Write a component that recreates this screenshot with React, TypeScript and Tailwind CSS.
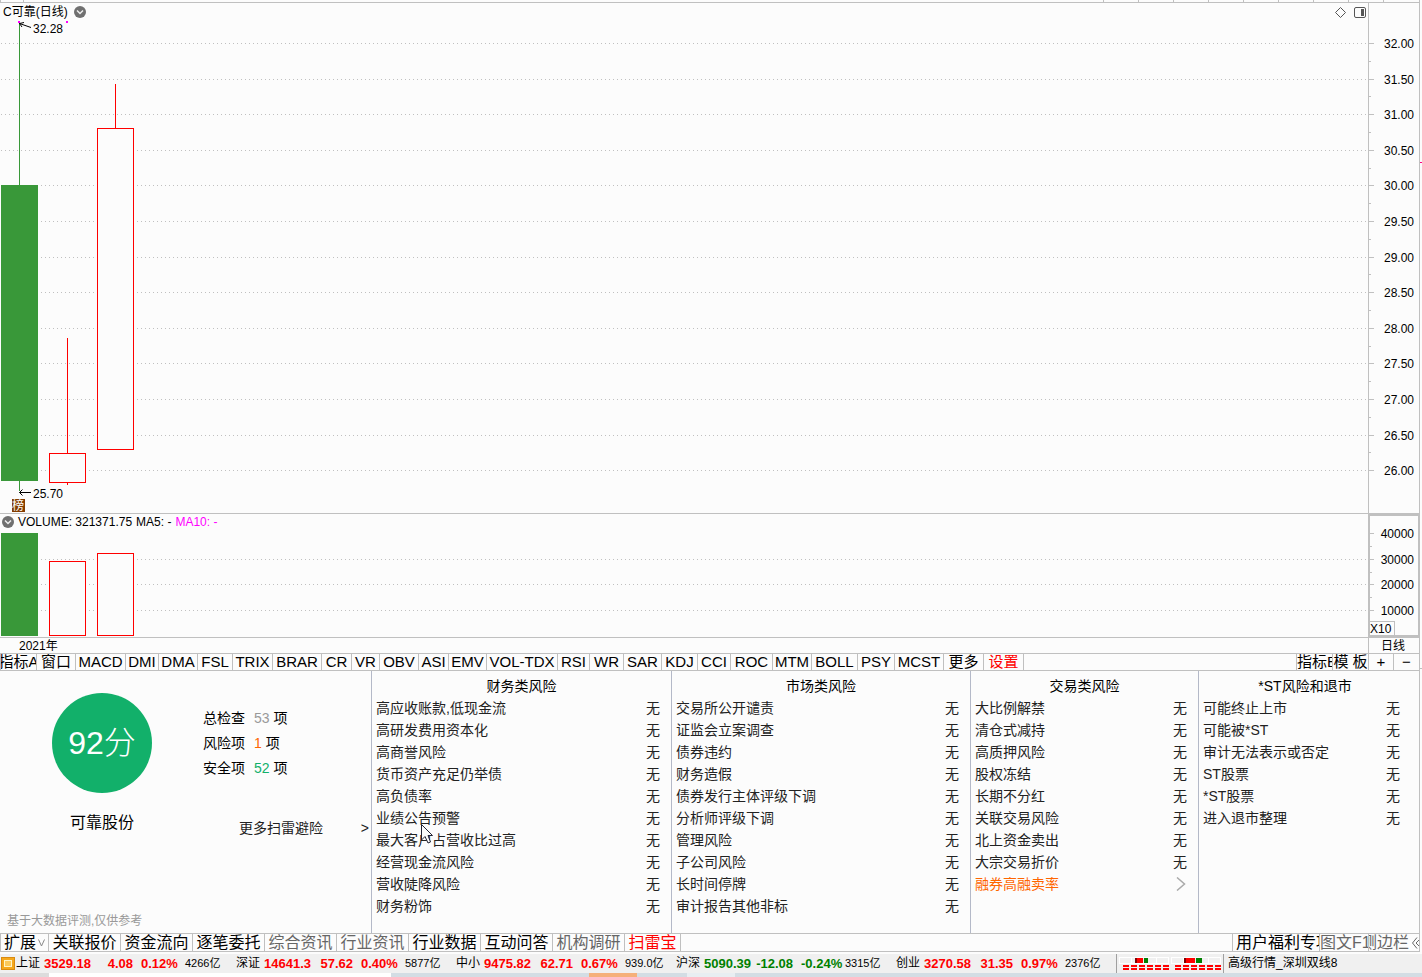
import { useState } from 'react';

const LINE = '#c0c0c0';
const UP = '#ff0000';
const DOWN = '#399839';

const indicators = [
  { name: '指标A', w: 'w-[36px]' },
  { name: '窗口', w: 'w-[39px]' },
  { name: 'MACD', w: 'w-[50px]' },
  { name: 'DMI', w: 'w-[33px]' },
  { name: 'DMA', w: 'w-[39px]' },
  { name: 'FSL', w: 'w-[35px]' },
  { name: 'TRIX', w: 'w-[40px]' },
  { name: 'BRAR', w: 'w-[49px]' },
  { name: 'CR', w: 'w-[30px]' },
  { name: 'VR', w: 'w-[28px]' },
  { name: 'OBV', w: 'w-[39px]' },
  { name: 'ASI', w: 'w-[30px]' },
  { name: 'EMV', w: 'w-[38px]' },
  { name: 'VOL-TDX', w: 'w-[71px]' },
  { name: 'RSI', w: 'w-[32px]' },
  { name: 'WR', w: 'w-[34px]' },
  { name: 'SAR', w: 'w-[38px]' },
  { name: 'KDJ', w: 'w-[36px]' },
  { name: 'CCI', w: 'w-[33px]' },
  { name: 'ROC', w: 'w-[42px]' },
  { name: 'MTM', w: 'w-[39px]' },
  { name: 'BOLL', w: 'w-[46px]' },
  { name: 'PSY', w: 'w-[37px]' },
  { name: 'MCST', w: 'w-[49px]' },
  { name: '更多', w: 'w-[40px]' },
  { name: '设置', w: 'w-[40px]', red: true },
];

const risks = [
  {
    title: '财务类风险',
    w: 'w-[300px]',
    items: ['高应收账款,低现金流', '高研发费用资本化', '高商誉风险', '货币资产充足仍举债', '高负债率', '业绩公告预警', '最大客户占营收比过高', '经营现金流风险', '营收陡降风险', '财务粉饰'],
  },
  {
    title: '市场类风险',
    w: 'w-[299px]',
    items: ['交易所公开谴责', '证监会立案调查', '债券违约', '财务造假', '债券发行主体评级下调', '分析师评级下调', '管理风险', '子公司风险', '长时间停牌', '审计报告其他非标'],
  },
  {
    title: '交易类风险',
    w: 'w-[228px]',
    items: ['大比例解禁', '清仓式减持', '高质押风险', '股权冻结', '长期不分红', '关联交易风险', '北上资金卖出', '大宗交易折价', '融券高融卖率'],
  },
  {
    title: '*ST风险和退市',
    w: 'flex-1 mr-2',
    items: ['可能终止上市', '可能被*ST', '审计无法表示或否定', 'ST股票', '*ST股票', '进入退市整理'],
  },
];

const infoTabs = [
  { name: '关联报价' },
  { name: '资金流向' },
  { name: '逐笔委托' },
  { name: '综合资讯', dim: true },
  { name: '行业资讯', dim: true },
  { name: '行业数据' },
  { name: '互动问答' },
  { name: '机构调研', dim: true },
];

const quotes = [
  { name: '上证', price: '3529.18', change: '4.08', pct: '0.12%', amount: '4266亿' },
  { name: '深证', price: '14641.3', change: '57.62', pct: '0.40%', amount: '5877亿' },
  { name: '中小', price: '9475.82', change: '62.71', pct: '0.67%', amount: '939.0亿' },
  { name: '沪深', price: '5090.39', change: '-12.08', pct: '-0.24%', amount: '3315亿' },
  { name: '创业', price: '3270.58', change: '31.35', pct: '0.97%', amount: '2376亿' },
];

const prices = Array.from({ length: 13 }, (_, i) => 32 - i * 0.5);
const priceY = (p: number) => Math.round(40 + (32 - p) * 71.2) + 0.5;
const volumes = [40000, 30000, 20000, 10000];
const volumeY = (v: number) => Math.round(19 + ((40000 - v) / 10000) * 25.6) + 0.5;

function GridLine({ y }: { y: number }) {
  return <line x1="1" x2="100%" y1={y} y2={y} stroke={LINE} strokeDasharray="1 3" />;
}

function HollowBar({ x, y, h }: { x: number; y: number; h: number }) {
  return (
    <>
      <rect x={x - 3} y={y} width="43" height={h} fill="#fcfcfc" />
      <rect x={x + 0.5} y={y + 0.5} width="36" height={h - 1} fill="#fcfcfc" stroke={UP} />
    </>
  );
}

function Collapse({ label }: { label: string }) {
  return (
    <button type="button" aria-label={label} className="shrink-0">
      <svg width="12" height="12" viewBox="0 0 12 12">
        <circle cx="6" cy="6" r="6" fill="#707070" />
        <path d="M3 4.5 L6 7.5 L9 4.5" fill="none" stroke="#eee" strokeWidth="1.5" />
      </svg>
    </button>
  );
}

function PriceChart() {
  return (
    <section className="flex h-[511px] border-b border-[#c0c0c0]">
      <div className="relative min-w-0 flex-1 border-r border-[#c0c0c0]">
        <svg className="block h-full w-full" shapeRendering="crispEdges">
          {prices.map(p => <GridLine key={p} y={priceY(p)} />)}
          <rect x="1" y="182" width="39" height="296" fill="#fcfcfc" />
          <rect x="1" y="182" width="37" height="296" fill={DOWN} />
          <path d="M19.5 19V182M19.5 478V488" stroke={DOWN} />
          <HollowBar x={49} y={450} h={30} />
          <path d="M67.5 335V450M67.5 480V482" stroke={UP} />
          <HollowBar x={97} y={125} h={322} />
          <path d="M115.5 81V125" stroke={UP} />
          <path d="M18 18h2v2h-2zM66 18h2v2h-2z" fill="#ff00ff" />
          <g fill="none" stroke="#000" shapeRendering="auto">
            <path d="M19.5 20.5L31 24.5M24 19.5L19.5 20.5L22 24" />
            <path d="M19.5 489.5H31M22.5 486.5L19.5 489.5L22.5 492.5" />
          </g>
          <text x="33" y="30" fontSize="12">32.28</text>
          <text x="33" y="495" fontSize="12">25.70</text>
          <rect x="12" y="496" width="13" height="13" fill="#843c00" />
          <text x="12" y="507" fontSize="12" fill="#fff">榜</text>
        </svg>
        <div className="absolute inset-x-0 top-0 flex h-[18px] items-center justify-between pr-0.5 pl-[3px] text-xs">
          <div className="flex items-center gap-1.5">
            <span>C可靠(日线)</span>
            <Collapse label="主图" />
          </div>
          <div className="flex items-center gap-2">
            <button type="button" aria-label="标记">
              <svg width="11" height="11" viewBox="0 0 11 11">
                <path d="M5.5 0.5L10.5 5.5L5.5 10.5L0.5 5.5Z" fill="none" stroke="#555" />
              </svg>
            </button>
            <button type="button" aria-label="侧栏">
              <svg width="12" height="11" viewBox="0 0 12 11">
                <rect x="0.5" y="0.5" width="11" height="10" rx="1.5" fill="none" stroke="#555" />
                <rect x="7" y="2" width="3" height="7" fill="#555" />
              </svg>
            </button>
          </div>
        </div>
      </div>
      <svg className="block h-full w-[50px]" shapeRendering="crispEdges">
        {prices.map(p => (
          <g key={p}>
            <path d={`M0 ${priceY(p)}h5`} stroke={LINE} />
            {p > 26 && <path d={`M0 ${priceY(p - 0.25)}h2`} stroke={LINE} />}
            <text x="45" y={priceY(p) + 4} textAnchor="end" fontSize="12">{p.toFixed(2)}</text>
          </g>
        ))}
      </svg>
    </section>
  );
}

function VolumeChart() {
  return (
    <section className="flex h-[124px] border-b border-[#c0c0c0]">
      <div className="relative min-w-0 flex-1">
        <svg className="block h-full w-full" shapeRendering="crispEdges">
          {volumes.slice(1).map(v => <GridLine key={v} y={volumeY(v)} />)}
          <rect x="1" y="19" width="39" height="103" fill="#fcfcfc" />
          <rect x="1" y="19" width="37" height="103" fill={DOWN} />
          <HollowBar x={49} y={47} h={75} />
          <HollowBar x={97} y={39} h={83} />
        </svg>
        <div className="absolute top-0 left-0 flex h-4 items-center gap-1 pl-0.5 text-xs">
          <Collapse label="副图" />
          <span>VOLUME: 321371.75</span>
          <span>MA5: -</span>
          <span className="text-[#ff00ff]">MA10: -</span>
        </div>
      </div>
      <div className="relative w-[51px] border-2 border-r border-[#c0c0c0]">
        <svg className="block h-full w-full" shapeRendering="crispEdges">
          {volumes.map(v => (
            <g key={v}>
              <path d={`M0 ${volumeY(v) - 2}h4M0 ${volumeY(v) + 11}h2`} stroke={LINE} />
              <text x="44" y={volumeY(v) + 2} textAnchor="end" fontSize="12">{v}</text>
            </g>
          ))}
        </svg>
        <span className="absolute bottom-0 left-0 h-3.5 w-[25px] border-t border-r border-[#c0c0c0] bg-[#fcfcfc] text-xs leading-[15px]">X10</span>
      </div>
    </section>
  );
}

function Score() {
  return (
    <div className="flex w-[371px] shrink-0 flex-col">
      <div className="flex pt-[22px] pl-[52px]">
        <div className="flex w-[100px] flex-col items-center">
          <div className="flex h-[100px] w-[100px] items-center justify-center rounded-full bg-[#12b06a] text-[32px] text-white">
            <span className="leading-10">92<span className="font-light">分</span></span>
          </div>
          <div className="mt-[18px] text-base">可靠股份</div>
        </div>
        <div className="ml-[51px] pt-[13px] text-sm leading-[25px]">
          <div>总检查<span className="mr-1 ml-[9px] text-[#999]">53</span>项</div>
          <div>风险项<span className="mr-1 ml-[9px] text-[#ff6600]">1</span>项</div>
          <div>安全项<span className="mr-1 ml-[9px] text-[#12b06a]">52</span>项</div>
        </div>
      </div>
      <a href="#more" className="-mt-[17px] ml-[239px] flex justify-between pr-0.5 text-sm leading-5 text-[#222]">
        <span>更多扫雷避险</span>
        <span>&gt;</span>
      </a>
      <div className="mt-auto pb-[3px] pl-[7px] text-xs leading-[18px] text-[#999]">基于大数据评测,仅供参考</div>
    </div>
  );
}

function RiskTable({ title, items, w }: { title: string; items: string[]; w: string }) {
  return (
    <div className={`${w} border-l border-[#b4b9c8] pt-1`}>
      <table className="w-full text-sm text-[#222]">
        <caption className="h-[22px] leading-[22px] text-black">{title}</caption>
        <tbody>
          {items.map(item => {
            const hit = item === '融券高融卖率';
            return (
              <tr key={item} className={hit ? 'h-[22px] text-[#ff6600]' : 'h-[22px]'}>
                <th scope="row" className="p-0 pl-1 text-left leading-[22px] font-normal">{item}</th>
                <td className="w-7 p-0 pr-[11px] text-right leading-[22px]">
                  {hit ? (
                    <button type="button" aria-label="查看" className="block pl-1.5">
                      <svg width="10" height="14" viewBox="0 0 10 14" fill="none" stroke="#aaa" strokeWidth="1.5">
                        <path d="M1 0.5L8.5 7L1 13.5" />
                      </svg>
                    </button>
                  ) : '无'}
                </td>
              </tr>
            );
          })}
        </tbody>
      </table>
    </div>
  );
}

function Levels({ cells }: { cells: [number, number, number, number] }) {
  const [dark, red, redW, greenW] = cells;
  return (
    <svg width="52" height="14" viewBox="0 0 52 14" shapeRendering="crispEdges">
      <path d="M0.5 0.5h49v6h-49zM12.5 0v7M37.5 0v7" fill="none" stroke="#fff" />
      <rect x={dark} y="1" width="2" height="5" fill="#800000" />
      <rect x={red} y="1" width={redW} height="5" fill="#ff0000" />
      <rect x={red + redW + 1} y="1" width={greenW} height="5" fill="#008000" />
      <path d="M4 9h46M4 12h46" stroke="#ff0000" strokeWidth="2" strokeDasharray="6 2" />
    </svg>
  );
}

export default function App() {
  const [tab, setTab] = useState('扫雷宝');

  return (
    <div className="flex flex-col overflow-hidden bg-[#fcfcfc] font-['Liberation_Sans','Noto_Sans_CJK_SC',sans-serif] text-black">
      <div className="flex">
        <main className="min-w-0 flex-1 border-r border-[#c0c0c0]">
          <div className="flex h-[3px] justify-between border-b border-[#c0c0c0]">
            <div className="w-6 border-x border-[#c0c0c0]" />
            <div className="flex pr-px">
              {Array.from({ length: 9 }, (_, i) => (
                <div key={i} className="w-[35px] border-l border-[#c0c0c0]" />
              ))}
            </div>
          </div>
          <PriceChart />
          <VolumeChart />
          <div className="flex h-4 border-b border-[#c0c0c0] text-xs leading-[17px]">
            <span className="flex-1 border-r border-[#c0c0c0] pl-[19px]">2021年</span>
            <button type="button" className="w-[50px] pr-0.5">日线</button>
          </div>

          <nav className="flex h-[17px] border-b border-l border-[#c0c0c0] text-[15px] leading-4">
            {indicators.map(t => (
              <button
                key={t.name}
                type="button"
                className={`${t.w} ${t.red ? 'text-[#ff0000]' : ''} flex shrink-0 justify-center overflow-hidden border-r border-[#c0c0c0] whitespace-nowrap`}
              >
                {t.name}
              </button>
            ))}
            <div className="flex-1" />
            <button type="button" className="flex w-[37px] overflow-hidden border-x border-[#c0c0c0] whitespace-nowrap">指标B</button>
            <button type="button" className="flex w-9 justify-center overflow-hidden border-r border-[#c0c0c0] whitespace-nowrap">模 板</button>
            <button type="button" className="w-[25px] border-r border-[#c0c0c0]">+</button>
            <button type="button" className="w-[25px]">−</button>
          </nav>

          <section className="relative flex h-[263px] border-b border-[#c0c0c0]">
            <Score />
            {risks.map(r => <RiskTable key={r.title} {...r} />)}
            <svg className="absolute top-[153px] left-[421px]" width="13" height="20" viewBox="0 0 13 20">
              <path d="M0.5 0.5V16L4 12.5L7 19L9.5 18L7 11.5H11.5Z" fill="#fcfcfc" stroke="#223" />
            </svg>
          </section>
        </main>
        <aside className="w-0.5">
          <div className="mt-[162px] h-px bg-[#ff0080]" />
          <div className="mt-[505px] h-px bg-[#c0c0c0]" />
        </aside>
      </div>

      <nav className="mr-0.5 flex h-[18px] border-r border-b border-l border-[#c0c0c0] text-base leading-[17px]">
        <button type="button" className="flex w-12 items-center justify-center gap-0.5 border-r border-[#c0c0c0]">
          扩展
          <svg width="7" height="8" viewBox="0 0 7 8" fill="none" stroke="#888">
            <path d="M0.5 0.5L3.5 7L6.5 0.5" />
          </svg>
        </button>
        {infoTabs.map(t => (
          <button
            key={t.name}
            type="button"
            onClick={() => setTab(t.name)}
            className={`${tab === t.name ? 'text-[#ff0000]' : t.dim ? 'text-[#666]' : ''} w-[72px] shrink-0 border-r border-[#c0c0c0] whitespace-nowrap`}
          >
            {t.name}
          </button>
        ))}
        <button
          type="button"
          onClick={() => setTab('扫雷宝')}
          className={`${tab === '扫雷宝' ? 'text-[#ff0000]' : ''} w-14 shrink-0 border-r border-[#c0c0c0]`}
        >
          扫雷宝
        </button>
        <div className="flex-1" />
        <button type="button" className="flex w-[88px] overflow-hidden border-x border-[#c0c0c0] pl-[3px] whitespace-nowrap">用户福利专项</button>
        <button type="button" className="flex w-[49px] overflow-hidden border-r border-[#c0c0c0] whitespace-nowrap text-[#666]">图文F10</button>
        <button type="button" className="flex w-10 justify-end overflow-hidden whitespace-nowrap text-[#666]">侧边栏</button>
        <button type="button" aria-label="收起" className="flex w-2.5 items-center justify-end">
          <svg width="7" height="12" viewBox="0 0 7 12" fill="none" stroke="#666">
            <path d="M5 0.5L0.5 6L5 11.5M7 3L4 6L7 9" />
          </svg>
        </button>
      </nav>

      <footer className="mt-0.5 flex h-[19px] items-center bg-[#f0f0f0] text-xs leading-[19px]">
        <svg className="mr-px ml-px shrink-0" width="14" height="13" viewBox="0 0 14 13">
          <rect x="0.5" y="0.5" width="13" height="12" fill="#f5a81c" stroke="#d98a10" />
          <rect x="3.5" y="3.5" width="7" height="6" fill="#fbc95a" stroke="#fff3c4" />
        </svg>
        {quotes.map(q => (
          <div key={q.name} className="grid w-[220px] shrink-0 grid-cols-[28px_47px_42px_52px_51px]">
            <span>{q.name}</span>
            <b className={q.change.startsWith('-') ? 'text-[13px] text-[#008000]' : 'text-[13px] text-[#ff0000]'}>{q.price}</b>
            <b className={q.change.startsWith('-') ? 'text-right text-[13px] text-[#008000]' : 'text-right text-[13px] text-[#ff0000]'}>{q.change}</b>
            <b className={q.change.startsWith('-') ? 'pl-2 text-[13px] text-[#008000]' : 'pl-2 text-[13px] text-[#ff0000]'}>{q.pct}</b>
            <span className="text-[11px]">{q.amount}</span>
          </div>
        ))}
        <div className="flex h-full shrink-0 items-center border-x border-[#a0a0a0] pl-0.5">
          <Levels cells={[16, 18, 6, 4]} />
          <Levels cells={[13, 15, 9, 6]} />
        </div>
        <span className="pl-1 whitespace-nowrap">高级行情_深圳双线8</span>
      </footer>

      <div className="flex h-1 bg-[#d3dde4]">
        <div className="w-[49px] bg-[#dcdcdc]" />
        <div className="w-[342px] bg-white" />
        <div className="ml-[198px] w-12 bg-[#f5b07a]" />
        <div className="ml-[50px] w-12 bg-[#e8eef2]" />
      </div>
    </div>
  );
}
